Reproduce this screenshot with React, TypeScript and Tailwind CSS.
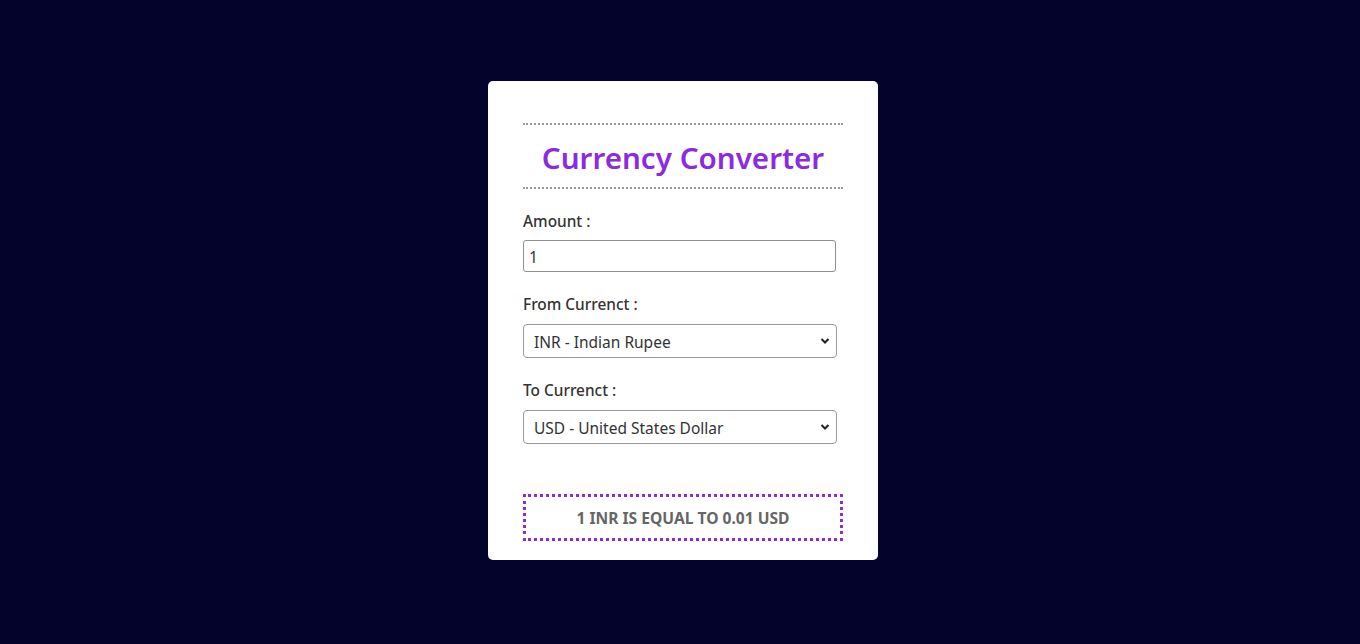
import { useState } from "react";

const currencies = [
  { code: "INR", name: "Indian Rupee" },
  { code: "USD", name: "United States Dollar" },
  { code: "EUR", name: "Euro" },
  { code: "GBP", name: "British Pound" },
  { code: "JPY", name: "Japanese Yen" },
];

function Chevron() {
  return (
    <svg
      className="pointer-events-none absolute right-[7px] top-1/2 -translate-y-1/2"
      width="10"
      height="7"
      viewBox="0 0 10 7"
      fill="none"
    >
      <path d="M1.5 1.5 L5 5 L8.5 1.5" stroke="#222" strokeWidth="2" />
    </svg>
  );
}

function CurrencySelect({
  value,
  onChange,
}: {
  value: string;
  onChange: (v: string) => void;
}) {
  return (
    <div className="relative w-[314px]">
      <select
        value={value}
        onChange={(e) => onChange(e.target.value)}
        className="h-[34px] w-full appearance-none rounded-[4px] border border-[#9a9a9a] bg-white pt-[3px] pl-[10px] text-[15.5px] text-[#333] outline-none"
      >
        {currencies.map((c) => (
          <option key={c.code} value={c.code}>
            {c.code} - {c.name}
          </option>
        ))}
      </select>
      <Chevron />
    </div>
  );
}

export default function App() {
  const [amount, setAmount] = useState("1");
  const [from, setFrom] = useState("INR");
  const [to, setTo] = useState("USD");

  return (
    <div
      className="flex min-h-screen items-center justify-center bg-[#03032b] pl-[6px] pb-[3px]"
      style={{ fontFamily: '"Noto Sans", "Open Sans", sans-serif' }}
    >
      <div className="w-[390px] rounded-[5px] bg-white px-[35px] pt-[42px] pb-[19px]">
        <div className="border-y-2 border-dotted border-[#999]">
          <h1 className="pt-[14px] pb-[10px] text-center text-[29.6px] leading-[38px] font-semibold text-[#8a2be2]">
            Currency Converter
          </h1>
        </div>

        <div className="mt-[22px] text-[15.4px] leading-[21px] font-medium text-[#333]">
          <label className="block">Amount :</label>
          <input
            value={amount}
            onChange={(e) => setAmount(e.target.value)}
            className="mt-[8px] h-[32px] w-[313px] rounded-[3px] border border-[#8f8f8f] px-[5px] pt-[2px] text-[15.5px] font-normal text-[#333] outline-none"
          />

          <label className="mt-[22px] block">From Currenct :</label>
          <div className="mt-[9px] font-normal">
            <CurrencySelect value={from} onChange={setFrom} />
          </div>

          <label className="mt-[22px] block">To Currenct :</label>
          <div className="mt-[9px] font-normal">
            <CurrencySelect value={to} onChange={setTo} />
          </div>
        </div>

        <div className="mt-[50px] flex h-[47px] items-center justify-center border-[3px] border-dotted border-[#8a2be2] pt-[3px] text-[15.6px] font-bold text-[#666]">
          {amount} {from} IS EQUAL TO 0.01 {to}
        </div>
      </div>
    </div>
  );
}
